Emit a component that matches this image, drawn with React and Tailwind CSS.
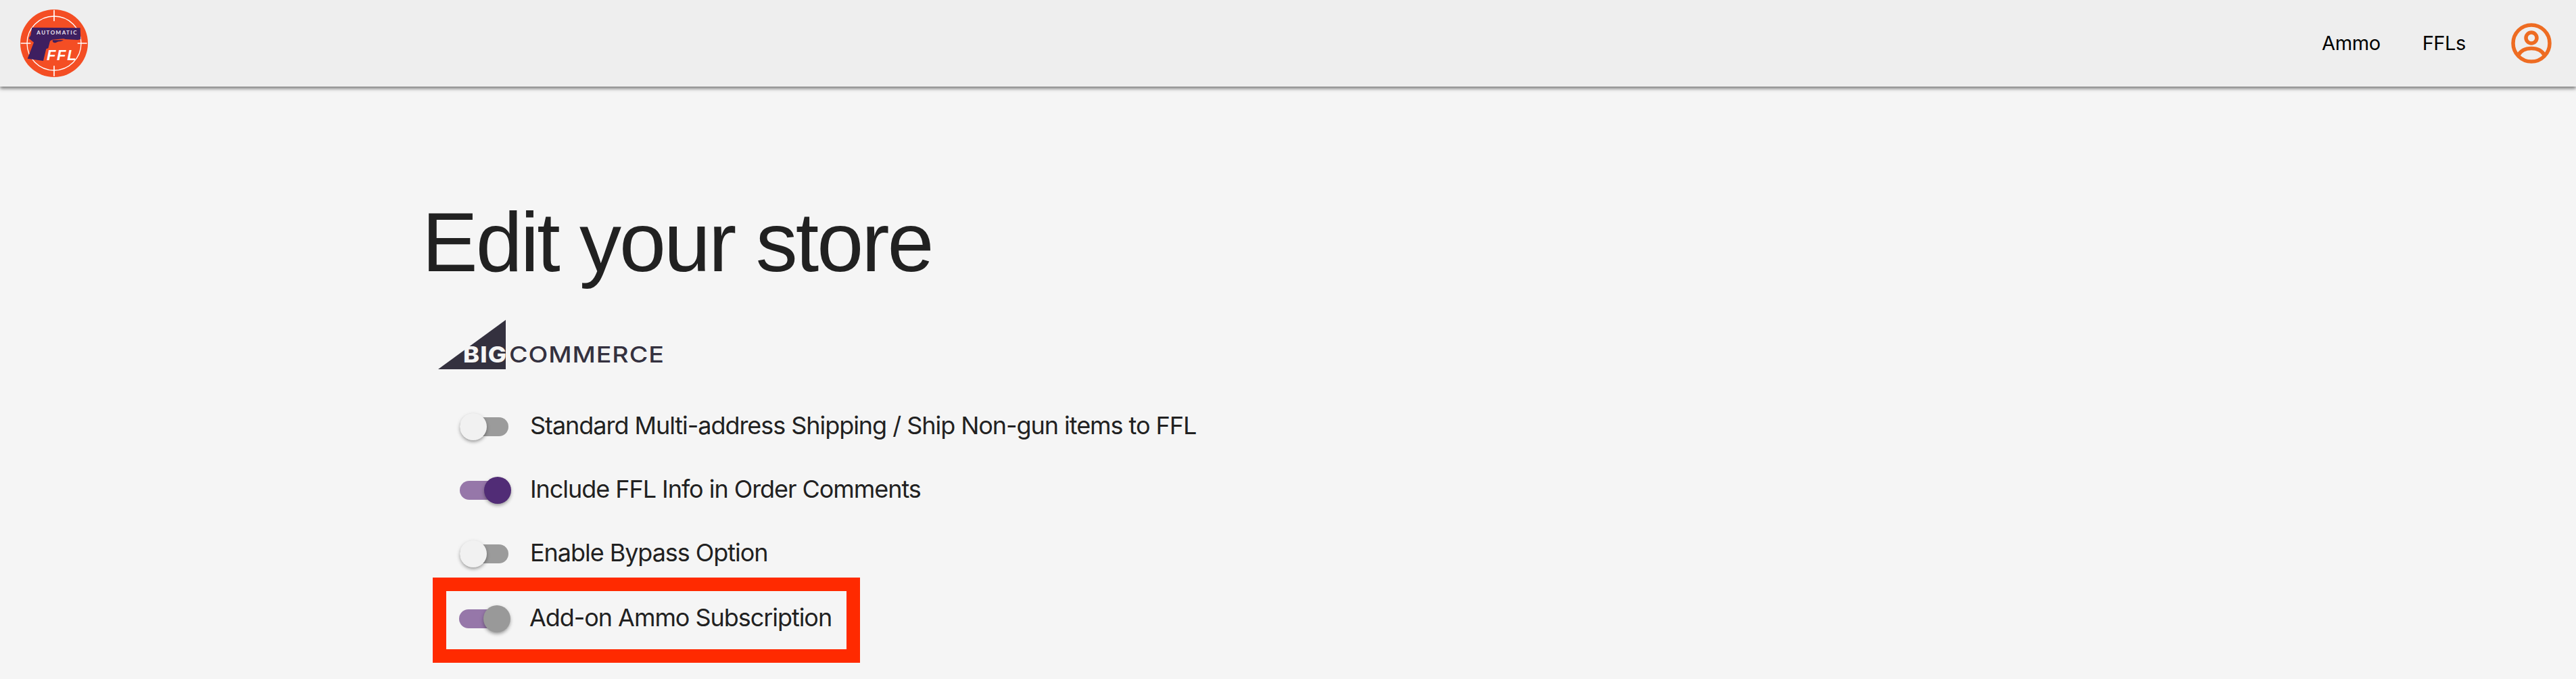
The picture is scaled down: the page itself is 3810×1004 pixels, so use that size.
import React from "react";

function Logo() {
  return (
    <svg width="100" height="100" viewBox="90 40 300 300" className="block shrink-0">
      <circle cx="240" cy="190" r="150" fill="#f44e24" />
      <circle cx="240" cy="190" r="120" fill="none" stroke="#fff" strokeWidth="4" />
      <path d="M240 42V92M240 290V336M92 190H136M344 190H386" stroke="#fff" strokeWidth="5" fill="none" />
      <path
        d="M142 120L356 122L358 172L345 175L290 172L282 170L232 174L222 180L214 212L205 215L192 268L122 258L150 186L128 168L136 155Z"
        fill="#3e1f60"
      />
      <path d="M226 178C222 196 240 198 250 192C262 186 276 190 286 184L280 172Z" fill="#f44e24" />
      <path d="M233 176C232 188 242 190 250 186C262 180 272 184 282 176Z" fill="#3e1f60" />
      <text x="163" y="151" fill="#ece6f0" fontFamily="Lato, sans-serif" fontWeight="700" fontSize="24" letterSpacing="4.4">AUTOMATIC</text>
      <text x="207" y="265" fill="#fff" fontFamily="'Liberation Sans', sans-serif" fontStyle="italic" fontWeight="700" fontSize="66" letterSpacing="5">FFL</text>
    </svg>
  );
}

function UserIcon() {
  return (
    <svg width="60" height="60" viewBox="0 0 60 60" fill="none" stroke="#ee6c22" strokeWidth="5.5" className="block">
      <circle cx="30" cy="30" r="27" />
      <circle cx="30" cy="22" r="8" />
      <path d="M10.5 48C14 41 21 37.5 30 37.5C39 37.5 46 41 49.5 48" />
    </svg>
  );
}

function BigCommerceLogo() {
  return (
    <div className="relative w-[340px] h-[76px] ml-[28px]">
      <svg width="100" height="73" viewBox="0 0 100 73" className="absolute left-0 top-0 block">
        <path d="M0 73L100 0V73Z" fill="#34313f" />
      </svg>
      <span className="absolute left-[37px] top-[31px] text-[33px] leading-[40px] font-extrabold text-[#f5f5f5] tracking-[1px] origin-left scale-x-[1.1]">BIG</span>
      <span className="absolute left-[105px] top-[31px] text-[33px] leading-[40px] font-medium text-[#34313f] tracking-[0.8px] origin-left scale-x-[1.14]">COMMERCE</span>
    </div>
  );
}

function Toggle({ on, thumb }) {
  const track = on ? "bg-[#9677a9]" : "bg-[#9b9b9b]";
  const place = on ? "left-[36px]" : "left-0";
  return (
    <div className="relative w-[76px] h-[40px] shrink-0">
      <div className={`absolute left-0 top-[6px] w-[72px] h-[28px] rounded-full ${track}`} />
      <div
        className={`absolute top-0 ${place} w-[40px] h-[40px] rounded-full ${thumb} shadow-[0_3px_5px_-1px_rgba(0,0,0,0.3),0_2px_6px_rgba(0,0,0,0.14)]`}
      />
    </div>
  );
}

function Row({ on, thumb, children }) {
  return (
    <div className="flex items-center h-[94px] gap-[28px]">
      <Toggle on={on} thumb={thumb} />
      <span className="text-[36px] leading-[48px] tracking-[-1.05px] text-[#212121] whitespace-nowrap -mt-[4px]">{children}</span>
    </div>
  );
}

export default function App() {
  return (
    <div className="min-h-[1004px] bg-[#f5f5f5] font-['Inter',sans-serif] overflow-hidden">
      <header className="h-[128px] bg-[#eeeeee] flex items-center justify-between pl-[30px] pr-[36px] shadow-[0_3px_5px_rgba(0,0,0,0.5)]">
        <Logo />
        <nav className="flex items-center">
          <a className="text-[29px] leading-[40px] tracking-[-0.4px] text-black mr-[62px]">Ammo</a>
          <a className="text-[29px] leading-[40px] tracking-[-0.4px] text-black mr-[67px]">FFLs</a>
          <UserIcon />
        </nav>
      </header>
      <main className="pl-[628px] pt-[158px]">
        <h1 className="-ml-[4px] text-[124px] leading-[144px] tracking-[-3px] text-[#212121] font-normal font-['Liberation_Sans',sans-serif]">Edit your store</h1>
        <div className="mt-[43px] ml-[-8px]">
          <BigCommerceLogo />
        </div>
        <div className="mt-[35px] pl-[52px]">
          <Row thumb="bg-[#f1f1f1]">Standard Multi-address Shipping / Ship Non-gun items to FFL</Row>
          <Row on thumb="bg-[#512c76]">Include FFL Info in Order Comments</Row>
          <Row thumb="bg-[#f1f1f1]">Enable Bypass Option</Row>
          <div className="-ml-[40px] -mt-[12px] w-[632px] h-[126px] border-[20px] border-[#ff2a00] pl-[19px] pb-[4px] flex items-center">
            <Row on thumb="bg-[#999999]">Add-on Ammo Subscription</Row>
          </div>
        </div>
      </main>
    </div>
  );
}
